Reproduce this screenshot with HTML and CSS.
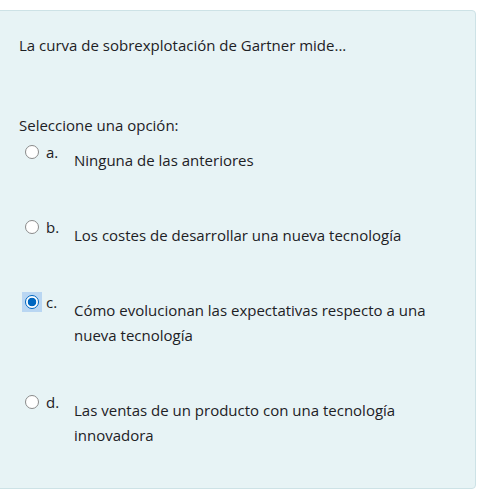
FILE: index.html
```html
<!DOCTYPE html>
<html lang="es">
<head>
<meta charset="utf-8">
<link rel="stylesheet" href="styles.css">
</head>
<body>
<div class="card">
  <p class="question">La curva de sobrexplotación de Gartner mide...</p>
  <div class="prompt">Seleccione una opción:</div>
  <div class="options">
    <div class="option">
      <span class="radio-wrap"><span class="radio"></span></span>
      <span class="letter">a.</span>
      <span class="text">Ninguna de las anteriores</span>
    </div>
    <div class="option">
      <span class="radio-wrap"><span class="radio"></span></span>
      <span class="letter">b.</span>
      <span class="text">Los costes de desarrollar una nueva tecnología</span>
    </div>
    <div class="option">
      <span class="radio-wrap focused"><span class="radio checked"></span></span>
      <span class="letter">c.</span>
      <span class="text">Cómo evolucionan las expectativas respecto a una nueva tecnología</span>
    </div>
    <div class="option">
      <span class="radio-wrap"><span class="radio"></span></span>
      <span class="letter">d.</span>
      <span class="text">Las ventas de un producto con una tecnología innovadora</span>
    </div>
  </div>
</div>
</body>
</html>
```

FILE: styles.css
```css
html, body {
  margin: 0;
  padding: 0;
  background: #ffffff;
}
body {
  font-family: "Open Sans", "Noto Sans", sans-serif;
  font-size: 15px;
  color: #1d2125;
}
.card {
  margin: 10px 0 0 -1px;
  width: 477px;
  height: 479px;
  box-sizing: border-box;
  background: #e7f3f5;
  border: 1px solid #cde2e6;
  border-radius: 0 4px 4px 0;
  padding: 22px 18px 0 19px;
}
.question {
  margin: 0;
  line-height: 24px;
}
.prompt {
  margin-top: 56px;
  line-height: 24px;
}
.options {
  margin-top: 3px;
  display: flex;
  flex-direction: column;
  gap: 42px;
}
.option {
  display: flex;
  align-items: flex-start;
  line-height: 25px;
}
.radio-wrap {
  width: 20px;
  height: 20px;
  margin: 2px 0 0 3px;
  display: flex;
  align-items: center;
  justify-content: center;
  flex: none;
}
.radio-wrap.focused {
  background: #b9d6f2;
}
.radio {
  width: 14px;
  height: 14px;
  box-sizing: border-box;
  border-radius: 50%;
  border: 1px solid #8a8a8a;
  background: #ffffff;
}
.radio.checked {
  border: 1px solid #0067c0;
  background: radial-gradient(circle, #0067c0 0 4px, #ffffff 4.6px);
}
.letter {
  flex: none;
  width: 28px;
  margin-left: 4px;
}
.text {
  padding-top: 8px;
  max-width: 370px;
}
```
